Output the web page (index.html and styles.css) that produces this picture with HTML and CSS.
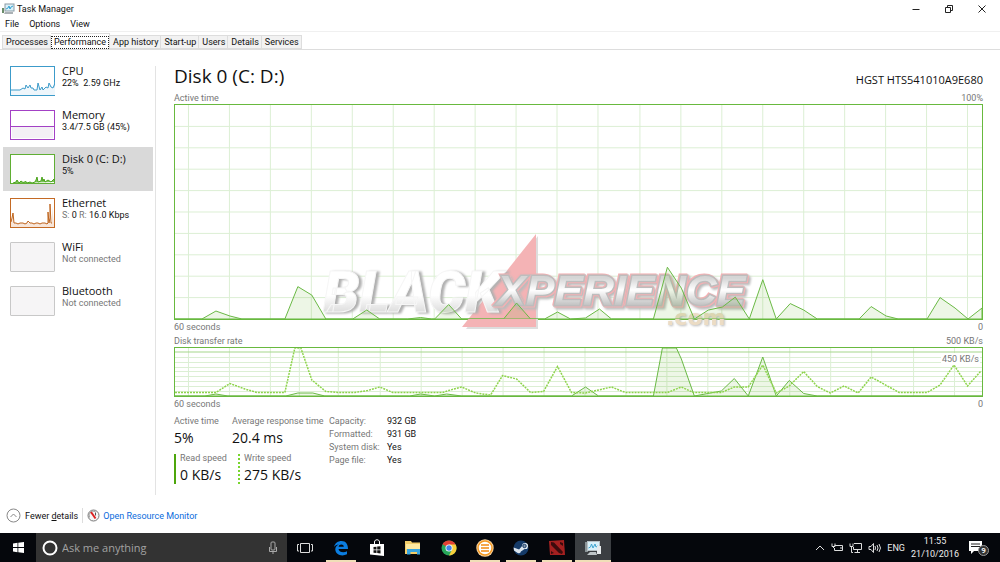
FILE: index.html
```html
<!DOCTYPE html>
<html lang="en">
<head>
<meta charset="utf-8">
<title>Task Manager</title>
<link rel="stylesheet" href="styles.css">
</head>
<body>
<header class="titlebar">
  <svg class="app-icon" width="13" height="12" viewBox="0 0 13 12"><rect x="3" y="1" width="9" height="7" fill="#d9f1fa" stroke="#8b9aa3"/><path d="M4 6l2-1 1-2 1 3 1-2 2-1" fill="none" stroke="#35a1d0"/><path d="M0 5h2v5H0z" fill="#6a8c6a"/><path d="M3 9h8v2H2z" fill="#aab1b5"/></svg>
  <h1 class="window-title">Task Manager</h1>
  <div class="window-buttons">
    <button aria-label="Minimise"><svg width="10" height="10" viewBox="0 0 10 10"><path d="M1.500 5.500h7" stroke="#222" fill="none"/></svg></button>
    <button aria-label="Restore"><svg width="10" height="10" viewBox="0 0 10 10"><path d="M1.500 3.500h5v5h-5zM3.500 3V1.500h5v5H7" stroke="#222" fill="none"/></svg></button>
    <button aria-label="Close"><svg width="10" height="10" viewBox="0 0 10 10"><path d="M1.500 1.500l7 7m0-7l-7 7" stroke="#222" fill="none"/></svg></button>
  </div>
</header>
<nav class="menubar"><button>File</button><button>Options</button><button>View</button></nav>
<div class="tabs" role="tablist">
  <button role="tab">Processes</button><button role="tab" class="selected" aria-selected="true"><span>Performance</span></button><button role="tab">App history</button><button role="tab">Start-up</button><button role="tab">Users</button><button role="tab">Details</button><button role="tab">Services</button>
</div>
<main class="content">
  <aside class="devices">
    <button class="device"><svg class="thumb" width="45" height="30" viewBox="0 0 45 30"><rect x=".5" y=".5" width="44" height="29" fill="#fff" stroke="#3c9bca"/><path d="M1 24h9l3-2 2 1 1-4 2 3 2-5 1 5 2 0 1 2h3l1-8 2 8 2-3 1 3 3-3 2 1 2-5 2 4 2 1 1-6v13H1z" fill="#eef6fb"/><path d="M1 24h9l3-2 2 1 1-4 2 3 2-3 1 3h2l1 2h3l1-7 2 7 2-3 1 3 3-3 2 1 1-5 2 4 2 1 2-5" fill="none" stroke="#3c9bca"/></svg><span class="device-text"><strong>CPU</strong><small>22%&ensp;2.59 GHz</small></span></button>
    <button class="device"><svg class="thumb" width="45" height="30" viewBox="0 0 45 30"><rect x=".5" y=".5" width="44" height="29" fill="#fff" stroke="#a341c5"/><path d="M2 17h41v11H2z" fill="#f3f0f5"/><path d="M1 16.500h43" stroke="#a341c5"/></svg><span class="device-text"><strong>Memory</strong><small>3.4/7.5 GB (45%)</small></span></button>
    <button class="device current"><svg class="thumb" width="45" height="30" viewBox="0 0 45 30"><rect x=".5" y=".5" width="44" height="29" fill="#fff" stroke="#5fae33"/><path d="M3 29l3-1 1-2 2 3 2-2 2 1.500 3-1 1 1.500 3-1 2 1 3-1 1-2 1-3 1 5 3-1 1-4 1 4 1-2 1 3 3-2 3 2 3-3 1 3" fill="#7cc35a" stroke="#4ba41c"/></svg><span class="device-text"><strong>Disk 0 (C: D:)</strong><small>5%</small></span></button>
    <button class="device"><svg class="thumb" width="45" height="30" viewBox="0 0 45 30"><rect x=".5" y=".5" width="44" height="29" fill="#fff" stroke="#c46a24"/><path d="M1 25l1-6 1-4 1 10h10l28 0V7l2 18v4H1z" fill="#f7e5d9"/><path d="M1 24l1-4 1-5 1 10h2l2 1 2-1h3l2 1 2-1 1-2 2 2h2l2 1 2-1h2l2 1 2-1h3l2 1 1-1V14l1 11 1-5V6l1 19h1" fill="none" stroke="#bf651e"/></svg><span class="device-text"><strong>Ethernet</strong><small><i>S:</i> 0 <i>R:</i> 16.0 Kbps</small></span></button>
    <button class="device offline"><span class="thumb empty"></span><span class="device-text"><strong>WiFi</strong><small>Not connected</small></span></button>
    <button class="device offline"><span class="thumb empty"></span><span class="device-text"><strong>Bluetooth</strong><small>Not connected</small></span></button>
  </aside>
  <section class="detail">
    <div class="heading"><h2>Disk 0 (C: D:)</h2><span class="model">HGST HTS541010A9E680</span></div>
    <div class="caption"><span>Active time</span><span>100%</span></div>
    <div class="chart active-chart">
      <svg class="plot" viewBox="175 105 808 215" preserveAspectRatio="none">
        <path class="grid" d="M175 126.500h808M175 148h808M175 169.500h808M175 191h808M175 212.500h808M175 234h808M175 255.500h808M175 277h808M175 298.500h808M188.500 105v215M229.500 105v215M270.500 105v215M311.500 105v215M352.500 105v215M393.500 105v215M434.500 105v215M475.500 105v215M516.500 105v215M557.500 105v215M598.500 105v215M640.500 105v215M681.500 105v215M722.500 105v215M763.500 105v215M804.500 105v215M845.500 105v215M886.500 105v215M927.500 105v215M968.500 105v215"/>
      </svg>
      <svg class="watermark" viewBox="0 0 440 104" aria-label="BlackXperience.com">
        <defs><linearGradient id="metal" x1="0" y1="0" x2="0" y2="1"><stop offset=".55" stop-color="#fff"/><stop offset=".8" stop-color="#dcdcdc"/></linearGradient><linearGradient id="steel" x1="0" y1="0" x2="0" y2="1"><stop offset=".25" stop-color="#d5d5d5"/><stop offset=".5" stop-color="#fff"/><stop offset=".8" stop-color="#c5c5c5"/></linearGradient></defs>
        <path class="wedge-shadow" d="M218 2v93h-72z"/>
        <path class="wedge" d="M216 0v93h-74z"/>
        <text class="black-word" x="3" y="78">BLACK</text>
        <text class="xp-word" x="177" y="71">XPERIENCE</text>
        <text class="com-word" x="346" y="91">.com</text>
      </svg>
      <svg class="plot" viewBox="175 105 808 215" preserveAspectRatio="none">
        <path class="area" d="M175 320H202L216 312 230 317 242 320H285L298 287.500 312 296 326 320H353L367 311 380 320H408L421 318.500 432 320H435L449 305.500 462 320H504L517 304 531 320H545L558 313 571 320 586 319 600 310 612 320H654L668 268 682 289 695 320 709 311 723 308 736 298 750 320 763.500 280.500 777 320 791 304.500 804.500 311 818 320H860L872 307.500 887 317 899 320H928L941 298.500 956 309 969 320 983 309V320Z"/>
      </svg>
    </div>
    <div class="caption below"><span>60 seconds</span><span>0</span></div>
    <div class="caption"><span>Disk transfer rate</span><span>500 KB/s</span></div>
    <div class="chart rate-chart">
      <svg class="plot" viewBox="175 348 808 48" preserveAspectRatio="none">
        <path class="grid" d="M175 357.500h808M175 362.500h808M175 367.500h808M175 371.500h808M175 376.500h808M175 381.500h808M175 386.500h808M175 391.500h808M188.500 348v48M229.500 348v48M270.500 348v48M299.500 348v48M338.500 348v48M380.500 348v48M421.500 348v48M462.500 348v48M503.500 348v48M544.500 348v48M585.500 348v48M626.500 348v48M667.500 348v48M708.500 348v48M749.500 348v48M790.500 348v48M831.500 348v48M872.500 348v48M914.500 348v48M955.500 348v48"/>
        <path class="limit" d="M175 352h808"/>
        <path class="area" d="M175 396H205L216 394 228 396H286L298 393H313L325 396H410L421 394 435 396 447 394 462 396H572L586 387 599 396H654L663 348H677L682 359 695 396 722 391 735 378.500 749 396 763.500 357 777 396 790 380.500 804.500 393.500 818 396H983Z"/>
        <path class="write" d="M175 392.500H216L230 383.500 245 389 257 392.500H285L295 348H301L312 380 326 391.500 338 392.500H355L368 390.500 380 387 393 392.500H443L449 390.500 462 387 476 393 491 395 503 375.500 517 379 531 392.500 544 391.500 558 366.500 572 392.500 586 393 612 387 626 392.500H668L682 387 694 392.500H722L735 387H749L763.500 365 777 393 790 386 804.500 371.500 818 386.500 831 393 845 386 859 393 872 377 900 392.500H928L941 385 955 365 968.500 386 982 371"/>
      </svg>
      <span class="limit-label">450 KB/s</span>
    </div>
    <div class="caption below"><span>60 seconds</span><span>0</span></div>
    <div class="stats">
      <div class="live">
        <div class="stat"><span>Active time</span><b>5%</b></div>
        <div class="stat"><span>Average response time</span><b>20.4 ms</b></div>
        <div class="stat read"><span>Read speed</span><b>0 KB/s</b></div>
        <div class="stat write-speed"><span>Write speed</span><b>275 KB/s</b></div>
      </div>
      <dl class="facts"><dt>Capacity:</dt><dd>932 GB</dd><dt>Formatted:</dt><dd>931 GB</dd><dt>System disk:</dt><dd>Yes</dd><dt>Page file:</dt><dd>Yes</dd></dl>
    </div>
  </section>
</main>
<footer class="footer">
  <button class="fewer"><svg width="15" height="15" viewBox="0 0 15 15" fill="none"><circle cx="7.500" cy="7.500" r="6.500" stroke="#888"/><path d="M4.500 9l3-3 3 3" stroke="#888"/></svg>Fewer&nbsp;<u>d</u>etails</button>
  <a class="monitor" href="#"><svg width="13" height="13" viewBox="0 0 13 13"><circle cx="6.500" cy="6.500" r="5.500" fill="#f6f6f6" stroke="#777"/><path d="M2.500 8.500a4.500 4.500 0 0 1 6-6" fill="none" stroke="#999"/><path d="M4 3l4.500 6.500" stroke="#d22" stroke-width="2"/><path d="M8.500 3.500v3" stroke="#555"/></svg>Open Resource Monitor</a>
</footer>
<div class="taskbar">
  <button class="cell" aria-label="Start"><svg width="13" height="13" viewBox="0 0 13 13" fill="#fff"><path d="M1 2.500l4.500-.7v4.300H1zM6.300 1.700L12 .9v5.200H6.300zM1 6.900h4.500v4.300L1 10.500zM6.300 6.900H12v5.200l-5.700-.8z"/></svg></button>
  <label class="search"><svg width="16" height="16" viewBox="0 0 16 16"><circle cx="8" cy="8" r="6.500" fill="none" stroke="#fff" stroke-width="2"/></svg><input type="text" placeholder="Ask me anything" aria-label="Search"><svg width="10" height="14" viewBox="0 0 10 14" fill="none" stroke="#aaa"><rect x="3" y="1" width="4" height="8" rx="1"/><path d="M1.500 6v4.500h7V6M5 10.500V13"/></svg></label>
  <button class="cell" aria-label="Task view"><svg width="16" height="12" viewBox="0 0 16 12" fill="none" stroke="#ddd"><path d="M3.500 1.500h9v9h-9zM2 2.500H.5v6.500H2M14 2.500h1.500v6.500H14"/></svg></button>
  <button class="cell running" aria-label="Edge"><svg width="16" height="16" viewBox="0 0 16 16"><path d="M1 7C2 3 5 1 8.500 1 13 1 15 4.500 15 9H5.500c.3 3 5 4.500 8.500 2.300v3C8.500 17 2.500 14.500 2.300 9.500 2.200 6.800 4 5.300 5.800 4.500 3.700 4.700 2 5.600 1 7zM5.600 6.800h5.200C10.700 3.500 6 3.700 5.600 6.800z" fill="#0b7de0"/></svg></button>
  <button class="cell" aria-label="Store"><svg width="16" height="18" viewBox="0 0 16 18"><path d="M1 5h14v12L1 15.500z" fill="#fff"/><path d="M5.500 5V3c0-3 5-3 5 0v2" fill="none" stroke="#fff"/><path d="M4.500 8l3-.3v2.800h-3zm3.700-.4l3.300-.4v3.300H8.200zM4.500 11.200h3V14l-3-.3zm3.700 0h3.300v3.300l-3.300-.4z" fill="#111"/></svg></button>
  <button class="cell" aria-label="File Explorer"><svg width="16" height="16" viewBox="0 0 16 16"><path d="M0 1h6l1 1.500h8V14H0z" fill="#f3cd69"/><path d="M1 4h14v5H1z" fill="#ffe9a0"/><path d="M2 9h13v5.500h-3v-2.500H5.500v2.500H2z" fill="#38a5e0"/></svg></button>
  <button class="cell" aria-label="Chrome"><svg width="16" height="16" viewBox="0 0 16 16"><circle cx="8" cy="8" r="7.500" fill="#27a65a"/><path d="M8 8L1.500 4.200A7.500 7.500 0 0 1 14.500 4.200z" fill="#e24034"/><path d="M8 4.500h6.700A7.500 7.500 0 0 1 8 15.500l3-5.700z" fill="#f8cf3c"/><circle cx="8" cy="8" r="3.500" fill="#fff"/><circle cx="8" cy="8" r="2.700" fill="#4484e8"/></svg></button>
  <button class="cell running" aria-label="Messenger"><svg width="18" height="18" viewBox="0 0 18 18"><circle cx="9" cy="9" r="8.700" fill="#f8d3a0"/><circle cx="9" cy="9" r="7" fill="#fff" stroke="#f59a24" stroke-width="1.500"/><path d="M5 6h8M5 9h8M5 12h8" stroke="#f28a12" stroke-width="1.500"/></svg></button>
  <button class="cell running" aria-label="Steam"><svg width="16" height="16" viewBox="0 0 16 16"><circle cx="8" cy="8" r="7.500" fill="#153a68"/><path d="M.6 7.500l5.500 2 3-3.500a3 3 0 1 1 2.500 3l-3.700 2.500a2.300 2.300 0 0 1-4 1L1 10.500z" fill="#dce5ee"/><circle cx="11.500" cy="6" r="1.700" fill="#8798aa" stroke="#153a68"/></svg></button>
  <button class="cell running" aria-label="Dota 2"><svg width="16" height="16" viewBox="0 0 16 16"><path d="M0 1l15-1 1 15H1z" fill="#a52020"/><path d="M2 2l3 .5 9 9.500-1 2-3-1-8-8zM11 2l3 1v3l-3-2zM2 11l3 2-3 1z" fill="#3c0b0d"/></svg></button>
  <button class="cell running active" aria-label="Task Manager"><svg width="18" height="16" viewBox="0 0 18 16"><path d="M1 2h3v10H1z" fill="#8b9498"/><rect x="3.500" y="1.500" width="12" height="9" fill="#d8f0fa" stroke="#b8c1c6"/><path d="M4.500 8l2-1 1-3 1.500 4 2-4 1 3 2-1" fill="none" stroke="#3fa4d0"/><path d="M6 12h6l1 3H3z" fill="#bfc5c8"/><path d="M13 6h4v8h-4z" fill="#e7eaec"/></svg></button>
  <div class="tray">
    <svg width="10" height="10" viewBox="0 0 10 10" fill="none" stroke="#ddd"><path d="M1 7l4-4 4 4"/></svg>
    <svg width="12" height="11" viewBox="0 0 12 11" fill="none" stroke="#ddd"><path d="M3.500 3.500h8v5h-8V6M1 1.500v3h3v-3M2.500 4.500V6M10 5v2"/></svg>
    <svg width="13" height="12" viewBox="0 0 13 12" fill="none" stroke="#ddd"><path d="M5 1.500h7.500v6H4.500V5M8.500 8v3M5.500 10.500H11M1 1.500v3h3v-3M2.500 5v5.500H4"/></svg>
    <svg width="13" height="12" viewBox="0 0 13 12" fill="none" stroke="#ddd"><path d="M1 4.500h2l2.500-3v9l-2.500-3H1zM7 4q1 2 0 4M9 3q2 3 0 6M11 2q3 4 0 8"/></svg>
    <span>ENG</span>
    <time class="clock">11:55<br>21/10/2016</time>
    <span class="notices"><svg width="13" height="13" viewBox="0 0 13 13"><path d="M0 0h13v10H5l-3 3v-3H0z" fill="#fff"/><path d="M2 3h9M2 5.500h9" stroke="#222"/></svg><b>9</b></span>
  </div>
</div>
</body>
</html>
```
FILE: styles.css
```css
* { box-sizing: border-box; }
body {
  margin: 0;
  min-height: 100vh;
  display: flex;
  flex-direction: column;
  background: #fff;
  color: #111;
  font: 9px/12px Roboto, "Noto Sans", sans-serif;
}
button { border: 0; padding: 0; background: none; color: inherit; font: inherit; text-align: left; }
svg { display: block; flex: none; }

.titlebar { display: flex; align-items: center; height: 17px; padding-left: 2px; }
.window-title { margin: 0 auto 0 2px; font-size: 9px; font-weight: 400; }
.window-buttons { display: flex; gap: 23px; padding-right: 13px; }
.menubar { display: flex; gap: 10px; height: 15px; padding: 0 5px; border-bottom: 1px solid #f0f0f0; }
.tabs { display: flex; align-items: flex-end; height: 18px; padding-left: 2px; border-bottom: 1px solid #ddd; }
.tabs button { height: 14px; padding: 0 2px 0 3px; border: 1px solid #ddd; border-left-width: 0; background: #f2f2f2; white-space: nowrap; }
.tabs button:first-child { border-left-width: 1px; }
.tabs .selected { height: 16px; padding: 0 1px; background: #fff; border-bottom: 0; }
.selected span { display: block; margin-top: 1px; padding: 0 2px; line-height: 11px; outline: 1px dotted #222; }

.content { flex: 1; display: flex; padding: 9px 17px 0 3px; }
.devices { width: 150px; flex: none; display: flex; flex-direction: column; }
.device { display: flex; align-items: flex-start; height: 44px; padding: 7px 7px 0; gap: 7px; }
.current { background: #d9d9d9; }
.device-text { display: flex; flex-direction: column; margin-top: -2px; white-space: nowrap; }
.device strong { font: 11px/13px "Open Sans", "Noto Sans", sans-serif; }
.device small { font-size: 9px; line-height: 13px; }
.device i { font-style: normal; color: #777; }
.offline small { color: #777; }
.thumb { flex: none; }
.empty { width: 45px; height: 30px; border: 1px solid #c8c8c8; border-radius: 1px; background: #f6f5f6; }

.detail { flex: 1; min-width: 0; margin: 7px 0 3px 2px; padding-left: 18px; border-left: 1px solid #e3e3e3; }
.heading { display: flex; justify-content: space-between; align-items: flex-end; height: 24px; font-family: "Open Sans", "Noto Sans", sans-serif; }
.heading h2 { margin: 0; font-size: 19px; line-height: 28px; font-weight: 400; }
.model { font-size: 11px; line-height: 20px; }
.caption { display: flex; justify-content: space-between; margin-top: 2px; color: #777; line-height: 12px; }
.below { margin-top: 1px; }
.chart { position: relative; border: 1px solid #68b93e; }
.active-chart { height: 216px; }
.rate-chart { height: 50px; }
.plot { position: absolute; inset: 0; width: 100%; height: 100%; }
.grid, .area, .limit, .write { vector-effect: non-scaling-stroke; }
.grid { stroke: #dcefd4; fill: none; }
.limit { stroke: #a5d68b; fill: none; }
.area { stroke: #6ab945; fill: #4da60c; fill-opacity: .1; }
.write { fill: none; stroke: #8ed44c; stroke-width: 1.5; stroke-dasharray: 2 1; }
.limit-label { position: absolute; right: 2px; top: 5px; padding: 0 1px; color: #777; background: #fff; }

.watermark { position: absolute; left: 18%; top: 129px; width: 440px; height: 104px; }
.wedge { fill: #f4b3b5; }
.wedge-shadow { fill: #ddd; }
.black-word { font: italic 900 58px Roboto, sans-serif; fill: url(#metal); stroke: #f6f6f6; filter: drop-shadow(3px 1px 1px #b0b0b0); }
.xp-word {
  font: italic 700 43px "Liberation Sans", sans-serif;
  fill: url(#steel);
  stroke: #bdbdbd;
  stroke-width: 3;
  paint-order: stroke;
  filter: drop-shadow(1px 1px 0 #f4b0b3) drop-shadow(-1px -1px 0 #f4b0b3) drop-shadow(2px 2px 1px #bbb);
}
.com-word { font: 700 22px "DejaVu Sans", sans-serif; fill: #ecdcc4; filter: drop-shadow(1px 1px 1px #bbb); }

.stats { display: flex; gap: 9px; padding-top: 5px; }
.live { display: grid; grid-template-columns: 58px 88px; row-gap: 5px; }
.stat { display: flex; flex-direction: column; white-space: nowrap; color: #777; }
.stat b { color: #111; font: 14px/22px "Open Sans", "Noto Sans", sans-serif; }
.read, .write-speed { height: 30px; padding-left: 4px; line-height: 9px; }
.read b, .write-speed b { line-height: 24px; }
.read { border-left: 2px solid #4da60c; }
.write-speed { margin-left: 6px; border-left: 2px dotted #79d52f; }
.facts { display: grid; grid-template-columns: 58px auto; align-content: start; margin: 0; line-height: 13px; }
.facts dt { color: #777; }
.facts dd { margin: 0; }

.footer { display: flex; align-items: center; height: 35px; padding-left: 6px; }
.fewer { display: flex; align-items: center; padding-right: 4px; border-right: 1px solid #ddd; }
.fewer svg { margin-right: 4px; }
.monitor { display: flex; align-items: center; gap: 3px; margin-left: 4px; color: #0b6bdc; text-decoration: none; }

.taskbar { display: flex; height: 29px; background: #05070c; color: #eee; }
.cell { display: flex; align-items: center; justify-content: center; width: 36px; flex: none; }
.running { background: linear-gradient(#f0dfb8, #f0dfb8) bottom / 30px 2px no-repeat; }
.active { background-color: #3b3e42; background-size: 36px 2px; }
.search { display: flex; align-items: center; gap: 4px; width: 251px; padding: 0 9px 0 6px; background: #333; }
.search input { flex: 1; min-width: 0; border: 0; padding: 0; background: none; color: #fff; font: 11px/20px "Open Sans", sans-serif; }
.search input::placeholder { color: #a2a2a2; }
.tray { display: flex; align-items: center; gap: 6px; margin-left: auto; padding-right: 11px; }
.clock { width: 48px; text-align: center; line-height: 13px; white-space: nowrap; }
.notices { position: relative; margin-left: 4px; width: 20px; }
.notices b { position: absolute; right: 0; top: 4px; width: 11px; height: 11px; border: 1px solid #999; border-radius: 50%; background: #333; font-size: 8px; line-height: 9px; text-align: center; }
```
